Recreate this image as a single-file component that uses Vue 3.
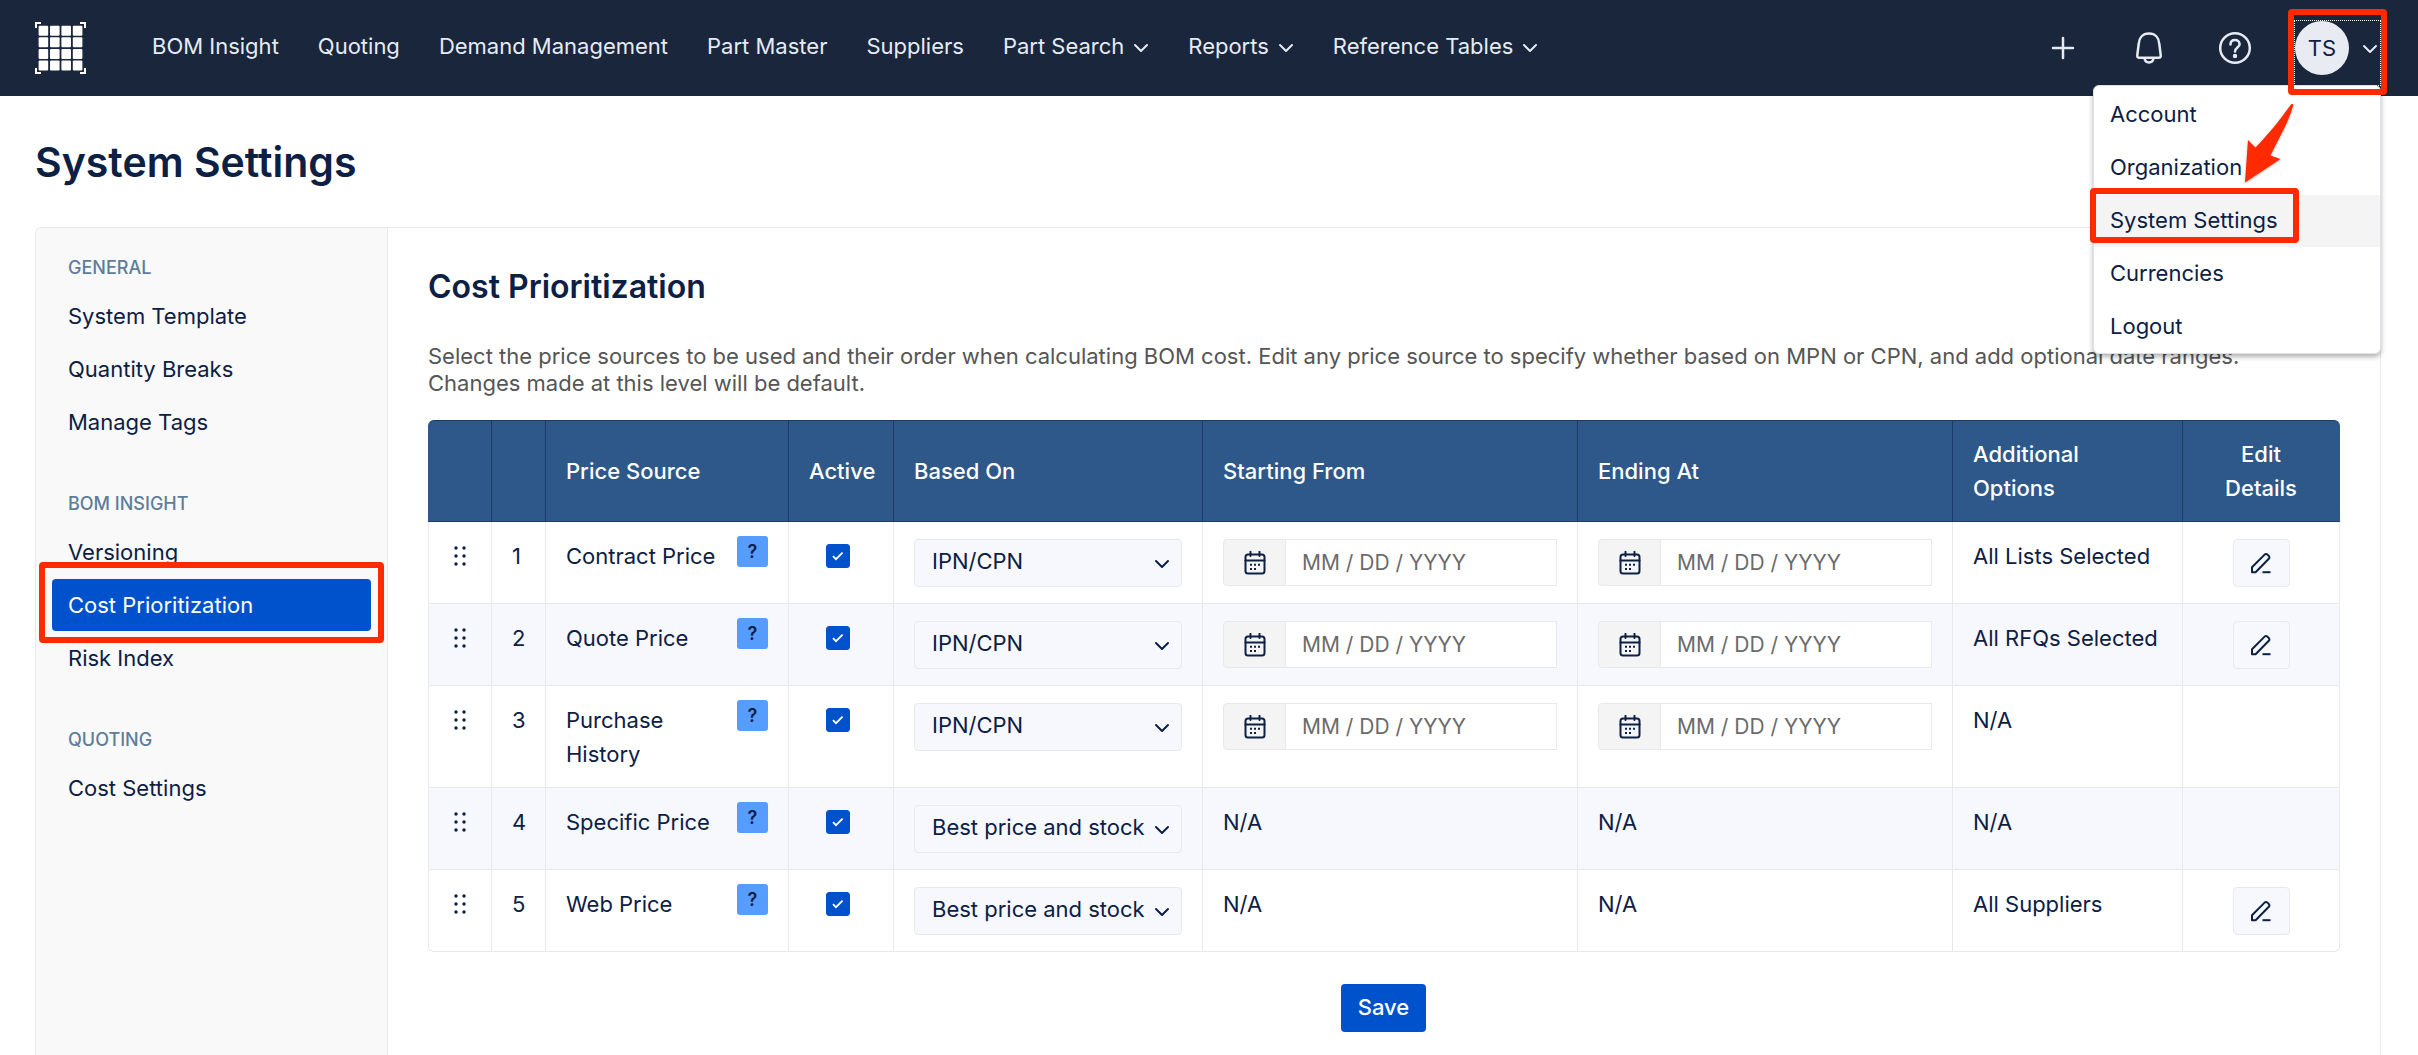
<script setup>
import { ref } from 'vue'

const navItems = [
  { label: 'BOM Insight' },
  { label: 'Quoting' },
  { label: 'Demand Management' },
  { label: 'Part Master' },
  { label: 'Suppliers' },
  { label: 'Part Search', menu: true },
  { label: 'Reports', menu: true },
  { label: 'Reference Tables', menu: true },
]

const userMenu = [
  { label: 'Account' },
  { label: 'Organization' },
  { label: 'System Settings', active: true },
  { label: 'Currencies' },
  { label: 'Logout' },
]

const groups = [
  { title: 'GENERAL', items: ['System Template', 'Quantity Breaks', 'Manage Tags'] },
  { title: 'BOM INSIGHT', items: ['Versioning', 'Cost Prioritization', 'Risk Index'] },
  { title: 'QUOTING', items: ['Cost Settings'] },
]
const current = 'Cost Prioritization'

const priceBases = ['IPN/CPN', 'MPN']
const stockBases = ['Best price and stock', 'Best price']

const rows = ref([
  { name: 'Contract Price', active: true, bases: priceBases, basis: 'IPN/CPN', dates: true, from: '', to: '', extra: 'All Lists Selected', edit: true },
  { name: 'Quote Price', active: true, bases: priceBases, basis: 'IPN/CPN', dates: true, from: '', to: '', extra: 'All RFQs Selected', edit: true },
  { name: 'Purchase History', active: true, bases: priceBases, basis: 'IPN/CPN', dates: true, from: '', to: '', extra: 'N/A', edit: false },
  { name: 'Specific Price', active: true, bases: stockBases, basis: 'Best price and stock', dates: false, extra: 'N/A', edit: false },
  { name: 'Web Price', active: true, bases: stockBases, basis: 'Best price and stock', dates: false, extra: 'All Suppliers', edit: true },
])
</script>

<template>
  <div class="app">
    <header class="topbar">
      <a class="logo" href="#" aria-label="Home">
        <svg width="51" height="52" viewBox="0 0 51 52" fill="#fff">
          <path d="M0 6V0H6V2H2V6ZM45 0H51V6H49V2H45ZM0 46V52H6V50H2V46ZM51 46V52H45V50H49V46Z" />
          <template v-for="r in 4" :key="r">
            <rect v-for="c in 4" :key="c" :x="c * 11.4 - 7.800" :y="r * 11.6 - 7.900" width="9.600" height="10" rx="1" />
          </template>
        </svg>
      </a>
      <nav class="nav" aria-label="Main">
        <a v-for="n in navItems" :key="n.label" href="#">
          {{ n.label }}
          <svg v-if="n.menu" class="chev" width="16" height="10" viewBox="0 0 16 10"><path d="M2 2L8 8L14 2" /></svg>
        </a>
      </nav>
      <div class="tools">
        <button type="button" class="tool" aria-label="Add">
          <svg width="34" height="34" viewBox="0 0 34 34"><path d="M17 7V27M7 17H27" /></svg>
        </button>
        <button type="button" class="tool" aria-label="Notifications">
          <svg width="34" height="34" viewBox="0 0 34 34">
            <path d="M17 2.500C10.500 2.500 7 7 6.700 13L5.300 24C5.100 26 5.800 26.800 7.400 26.800H26.600C28.200 26.800 28.900 26 28.700 24L27.300 13C27 7 23.500 2.500 17 2.500Z" />
            <path d="M12.500 27.500C13 30 14.800 31.400 17 31.400S21 30 21.500 27.500" />
          </svg>
        </button>
        <button type="button" class="tool" aria-label="Help">
          <svg width="34" height="34" viewBox="0 0 34 34">
            <circle cx="17" cy="17" r="14.800" />
            <path d="M12.500 13.500C12.500 10.500 14.500 9 17 9S21.600 10.600 21.600 13.200C21.600 16.500 17 16.600 17 20.500" />
            <circle cx="17" cy="25" r="1" class="dot" />
          </svg>
        </button>
        <div class="user">
          <button type="button" class="user-btn" aria-haspopup="menu" aria-expanded="true">
            <span class="avatar">TS</span>
            <svg class="chev" width="16" height="10" viewBox="0 0 16 10"><path d="M2 2L8 8L14 2" /></svg>
          </button>
          <span class="mark mark-user"></span>
          <ul class="menu">
            <li v-for="m in userMenu" :key="m.label">
              <a href="#" :class="{ on: m.active }">{{ m.label }}</a>
              <span v-if="m.active" class="mark mark-menu"></span>
            </li>
          </ul>
          <svg class="arrow" width="52" height="84" viewBox="0 0 52 84">
            <path d="M48 3.500C49.500 2.500 50.500 3.500 50 5C46 20 37 35 27.500 54.500L37.500 58L2 81.500L5 39L12.500 46.500C23 36 37 19 48 3.500Z" fill="#ff2a00" />
          </svg>
        </div>
      </div>
    </header>

    <h1>System Settings</h1>

    <div class="panel">
      <aside class="side">
        <section v-for="g in groups" :key="g.title">
          <h3>{{ g.title }}</h3>
          <ul>
            <li v-for="i in g.items" :key="i">
              <a href="#" :class="{ on: i === current }">{{ i }}</a>
              <span v-if="i === current" class="mark mark-side"></span>
            </li>
          </ul>
        </section>
      </aside>

      <main>
        <h2>Cost Prioritization</h2>
        <p class="intro">
          Select the price sources to be used and their order when calculating BOM cost. Edit any price source to specify
          whether based on MPN or CPN, and add optional date ranges.<br />Changes made at this level will be default.
        </p>

        <table>
          <colgroup>
            <col class="c-grip" /><col class="c-num" /><col class="c-src" /><col class="c-act" /><col class="c-base" />
            <col class="c-date" /><col class="c-date" /><col class="c-opt" /><col class="c-edit" />
          </colgroup>
          <thead>
            <tr>
              <th></th>
              <th></th>
              <th>Price Source</th>
              <th>Active</th>
              <th>Based On</th>
              <th>Starting From</th>
              <th>Ending At</th>
              <th>Additional Options</th>
              <th class="mid">Edit Details</th>
            </tr>
          </thead>
          <tbody>
            <tr v-for="(r, i) in rows" :key="r.name">
              <td class="mid">
                <svg class="grip" width="12" height="34" viewBox="0 0 12 34" fill="#0c2044">
                  <template v-for="y in [9, 17, 25]" :key="y">
                    <circle cx="2" :cy="y" r="1.700" /><circle cx="10" :cy="y" r="1.700" />
                  </template>
                </svg>
              </td>
              <td>{{ i + 1 }}</td>
              <td>
                <div class="source">
                  <span>{{ r.name }}</span>
                  <button type="button" class="hint" :aria-label="'About ' + r.name">?</button>
                </div>
              </td>
              <td class="mid">
                <label class="check">
                  <input v-model="r.active" type="checkbox" :aria-label="r.name + ' active'" />
                  <svg width="12" height="10" viewBox="0 0 12 10"><path d="M1 5.200L4 8.200L10.600 1.600" /></svg>
                </label>
              </td>
              <td>
                <div class="select">
                  <select v-model="r.basis" :aria-label="r.name + ' based on'">
                    <option v-for="b in r.bases" :key="b">{{ b }}</option>
                  </select>
                  <svg class="chev" width="16" height="10" viewBox="0 0 16 10"><path d="M2 2L8 8L14 2" /></svg>
                </div>
              </td>
              <td v-for="k in ['from', 'to']" :key="k">
                <label v-if="r.dates" class="date">
                  <span class="cal">
                    <svg width="22" height="24" viewBox="0 0 22 24">
                      <rect x="1.500" y="3.500" width="19" height="19" rx="2.500" />
                      <path d="M1.500 9.500H20.500M6.500 0.800V5M15.500 0.800V5" />
                      <path class="days" d="M6 13.800h2M10 13.800h2M14 13.800h2M6 18h2M10 18h2" />
                    </svg>
                  </span>
                  <input v-model="r[k]" type="text" placeholder="MM / DD / YYYY" :aria-label="r.name + ' ' + k" />
                </label>
                <template v-else>N/A</template>
              </td>
              <td>{{ r.extra }}</td>
              <td class="mid">
                <button v-if="r.edit" type="button" class="edit" :aria-label="'Edit ' + r.name">
                  <svg width="22" height="22" viewBox="0 0 22 22">
                    <path d="M2 20.200V15.200L14.600 2.600C15.400 1.800 16.600 1.800 17.400 2.600L18.800 4C19.600 4.800 19.600 6 18.800 6.800L5.600 20.200Z" />
                    <path d="M12.500 20.200H20.500" />
                  </svg>
                </button>
              </td>
            </tr>
          </tbody>
        </table>

        <button type="button" class="save">Save</button>
      </main>
    </div>
  </div>
</template>

<style>
body {
  margin: 0;
  background: #fff;
}
</style>

<style scoped>
* {
  box-sizing: border-box;
}
.app {
  display: flex;
  flex-direction: column;
  min-height: 100vh;
  font-family: Inter, "Liberation Sans", sans-serif;
  font-size: 22px;
  line-height: 34px;
  color: #0c2044;
}
a {
  color: inherit;
  text-decoration: none;
}
ul {
  list-style: none;
  margin: 0;
  padding: 0;
}
button,
input,
select {
  font: inherit;
  color: inherit;
  margin: 0;
}
button {
  border: 0;
  padding: 0;
  background: none;
  cursor: pointer;
}
svg {
  display: block;
}
.chev {
  flex: none;
  fill: none;
  stroke: currentColor;
  stroke-width: 2;
  stroke-linecap: round;
  stroke-linejoin: round;
}

.topbar {
  display: flex;
  align-items: center;
  height: 96px;
  padding: 0 37px 0 35px;
  background: #19263c;
  color: #e6ebf3;
}
.nav {
  display: flex;
  gap: 39px;
  margin-left: 66px;
  padding-bottom: 4px;
}
.nav a {
  display: flex;
  align-items: center;
  gap: 9px;
  white-space: nowrap;
}
.nav .chev {
  margin-top: 4px;
}
.tools {
  display: flex;
  align-items: center;
  gap: 52px;
  margin-left: auto;
}
.tool svg {
  fill: none;
  stroke: currentColor;
  stroke-width: 2.500;
  stroke-linecap: round;
  stroke-linejoin: round;
}
.tool .dot {
  fill: currentColor;
}
.user {
  position: relative;
  margin: 10px 0 0 -10px;
}
.user-btn {
  display: flex;
  align-items: flex-start;
  justify-content: space-between;
  width: 87px;
  height: 66px;
  padding: 0 2px 0 0;
  border: 1px dotted #fff;
}
.user-btn .chev {
  margin-top: 23px;
}
.avatar {
  width: 54px;
  height: 54px;
  border-radius: 50%;
  background: #e8ebf2;
  color: #0c2044;
  line-height: 54px;
  text-align: center;
}
.menu {
  position: absolute;
  top: 65px;
  right: 0;
  z-index: 1;
  display: flex;
  flex-direction: column;
  gap: 1px;
  width: 288px;
  padding: 3px 0 0;
  border: 1px solid #dfe1e6;
  border-radius: 6px;
  background: #fff;
  color: #0c2044;
  box-shadow: 0 3px 5px rgba(0, 0, 0, 0.3);
}
.menu li {
  position: relative;
}
.menu a {
  display: block;
  padding: 8px 16px 10px;
}
.menu .on {
  background: #f4f4f4;
}
.mark {
  position: absolute;
  z-index: 2;
  border: 6px solid #ff2a00;
  border-radius: 4px;
  pointer-events: none;
}
.mark-user {
  inset: -11px -6px -9px -6px;
}
.mark-menu {
  left: -4px;
  top: -7px;
  width: 209px;
  height: 55px;
}
.mark-side {
  inset: -17px -13px -12px -13px;
}
.arrow {
  position: absolute;
  top: 81px;
  right: 86px;
  z-index: 3;
  filter: drop-shadow(0 1px 1px rgba(0, 0, 0, 0.3));
}

h1 {
  margin: 0;
  padding: 40px 35px 39px;
  font-size: 41px;
  line-height: 52px;
  font-weight: 600;
}
.panel {
  display: flex;
  flex: 1;
  margin: 0 37px 0 35px;
  border: 1px solid #e8e9ed;
  border-bottom: 0;
  border-radius: 6px 6px 0 0;
}
.side {
  flex: none;
  width: 352px;
  padding: 23px 16px 0;
  border-right: 1px solid #e8e9ed;
  border-radius: 6px 0 0 0;
  background: #f9f9f9;
}
.side section {
  margin-bottom: 39px;
}
.side h3 {
  margin: 0 0 5px;
  padding: 0 16px;
  font-size: 18px;
  font-weight: 500;
  color: #5e7d9a;
}
.side ul {
  display: flex;
  flex-direction: column;
  gap: 1px;
}
.side li {
  position: relative;
}
.side a {
  display: block;
  padding: 9px 16px;
  border-radius: 4px;
}
.side .on {
  background: #0052cc;
  color: #fff;
}

main {
  flex: 1;
  min-width: 0;
  padding: 38px 41px 24px 40px;
}
h2 {
  margin: 0 0 35px;
  font-size: 32px;
  line-height: 42px;
  font-weight: 600;
}
.intro {
  margin: 0 0 23px;
  line-height: 27px;
  color: #555;
}
table {
  width: 100%;
  table-layout: fixed;
  border-spacing: 0;
  border-collapse: separate;
}
.c-grip { width: 64px; }
.c-num { width: 54px; }
.c-src { width: 243px; }
.c-act { width: 105px; }
.c-base { width: 309px; }
.c-date { width: 375px; }
.c-opt { width: 230px; }
.c-edit { width: 157px; }
th {
  padding: 16px 20px;
  border: solid #1d3b63;
  border-width: 1px 1px 1px 0;
  background: #2d5889;
  color: #fff;
  font-weight: 500;
  text-align: left;
}
th:first-child {
  border-left: 1px solid #2d5889;
  border-top-left-radius: 6px;
}
th:last-child {
  border-right-color: #2d5889;
  border-top-right-radius: 6px;
}
td {
  padding: 17px 20px 16px;
  border: solid #e8e9ed;
  border-width: 0 1px 1px 0;
  vertical-align: top;
}
td:first-child {
  border-left: 1px solid #e8e9ed;
}
tr:last-child td:first-child {
  border-bottom-left-radius: 6px;
}
tr:last-child td:last-child {
  border-bottom-right-radius: 6px;
}
tbody tr:nth-child(even) {
  background: #f6f8fd;
}
.mid {
  text-align: center;
}
.grip {
  margin: 0 auto;
}
.source {
  display: flex;
  align-items: flex-start;
  justify-content: space-between;
  gap: 12px;
}
.hint {
  flex: none;
  width: 31px;
  height: 31px;
  margin-top: -3px;
  border-radius: 3px;
  background: #579dff;
  font-size: 18px;
  line-height: 31px;
  font-weight: 600;
}
.check {
  display: grid;
  place-items: center;
  width: 24px;
  height: 24px;
  margin: 5px auto 0 17px;
}
.check input {
  grid-area: 1 / 1;
  appearance: none;
  width: 24px;
  height: 24px;
  border: 1px solid #0052cc;
  border-radius: 3px;
}
.check input:checked {
  background: #0052cc;
}
.check svg {
  grid-area: 1 / 1;
  z-index: 1;
  fill: none;
  stroke: #fff;
  stroke-width: 1.800;
  pointer-events: none;
}
.select {
  position: relative;
}
.select select {
  display: block;
  appearance: none;
  width: 100%;
  height: 48px;
  padding: 0 32px 4px 17px;
  border: 1px solid #e8e9ed;
  border-radius: 4px;
  background: #f6f8fd;
}
.select .chev {
  position: absolute;
  right: 12px;
  top: 20px;
  pointer-events: none;
}
.date {
  display: flex;
  height: 47px;
}
.cal {
  display: grid;
  place-items: center;
  flex: none;
  width: 63px;
  border: 1px solid #e8e9ed;
  border-radius: 4px 0 0 4px;
  background: #f4f4f4;
}
.cal svg {
  fill: none;
  stroke: #0c2044;
  stroke-width: 2;
  stroke-linecap: round;
}
.cal .days {
  stroke-linecap: butt;
}
.date input {
  flex: 1;
  min-width: 0;
  padding: 0 16px;
  font-size: 21px;
  border: 1px solid #e8e9ed;
  border-left: 0;
  border-radius: 0;
  background: #fff;
}
.date input::placeholder {
  color: #6b6b6b;
  opacity: 1;
}
.edit {
  display: grid;
  place-items: center;
  width: 57px;
  height: 48px;
  margin: 0 auto;
  border: 1px solid #e8e9ed;
  border-radius: 4px;
  background: #f6f8fd;
}
.edit svg {
  fill: none;
  stroke: #0c2044;
  stroke-width: 2;
  stroke-linejoin: round;
}
.save {
  display: block;
  height: 48px;
  margin: 32px auto 0;
  padding: 0 17px 2px;
  border-radius: 4px;
  background: #0052cc;
  color: #fff;
  font-weight: 500;
}
</style>
